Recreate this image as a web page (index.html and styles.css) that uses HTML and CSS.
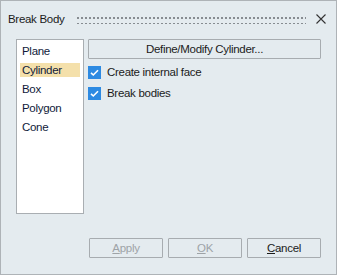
FILE: index.html
```html
<!DOCTYPE html>
<html lang="en">
<head>
    <meta charset="UTF-8">
    <title>Break Body</title>
    <link rel="stylesheet" href="styles.css">
</head>
<body>
    <div class="dialog">
        <div class="titlebar">
            <span class="title">Break Body</span>
            <span class="grip"></span>
            <svg class="close" width="10" height="10" viewBox="0 0 10 10">
                <path d="M0.5 0.5 L9.5 9.5 M9.5 0.5 L0.5 9.5" stroke="#333" stroke-width="1.1" fill="none"/>
            </svg>
        </div>
        <div class="body">
            <ul class="shapes">
                <li>Plane</li>
                <li class="selected">Cylinder</li>
                <li>Box</li>
                <li>Polygon</li>
                <li>Cone</li>
            </ul>
            <div class="options">
                <button class="btn wide">Define/Modify Cylinder...</button>
                <label class="check"><span class="box"><svg width="13" height="13" viewBox="0 0 13 13"><path d="M3 6.8 L5.3 9 L10 4.2" stroke="#fff" stroke-width="1.6" fill="none"/></svg></span>Create internal face</label>
                <label class="check"><span class="box"><svg width="13" height="13" viewBox="0 0 13 13"><path d="M3 6.8 L5.3 9 L10 4.2" stroke="#fff" stroke-width="1.6" fill="none"/></svg></span>Break bodies</label>
            </div>
        </div>
        <div class="footer">
            <button class="btn disabled"><u>A</u>pply</button>
            <button class="btn disabled"><u>O</u>K</button>
            <button class="btn"><u>C</u>ancel</button>
        </div>
    </div>
</body>
</html>
```
FILE: styles.css
```css
body {
    margin: 0;
    font-family: "Liberation Sans", Arial, sans-serif;
    font-size: 11.5px;
    letter-spacing: -0.3px;
    color: #1b1b1b;
}
.dialog {
    width: 335px;
    height: 273px;
    border: 1px solid #aeb3b7;
    background: #e4ebef;
    display: flex;
    flex-direction: column;
}
.titlebar {
    height: 37px;
    display: flex;
    align-items: center;
    padding: 0 10px 0 7px;
    box-sizing: border-box;
}
.title {
    margin-top: -1px;
}
.grip {
    flex: 1;
    height: 8px;
    margin: 0 10px 0 12px;
    background-image: radial-gradient(circle, #878c91 0.9px, transparent 1.2px);
    background-size: 4px 6px;
    background-position: 0 -1px;
}
.close {
    margin-top: -1px;
}
.body {
    display: flex;
    padding: 1px 15px 0 15px;
    gap: 4px;
}
.shapes {
    list-style: none;
    margin: 0;
    padding: 4px 3px;
    width: 60px;
    height: 165px;
    background: #fff;
    border: 1px solid #a9aeb2;
    color: #0f1a3a;
}
.shapes li {
    height: 14px;
    line-height: 14px;
    margin-bottom: 5px;
    padding-left: 2px;
}
.shapes li.selected {
    background: #f4e0ab;
}
.options {
    flex: 1;
    display: flex;
    flex-direction: column;
}
.btn {
    font: inherit;
    letter-spacing: inherit;
    color: #1b1b1b;
    background: #e4ebef;
    border: 1px solid #a7acb0;
    border-radius: 1px;
    height: 20px;
    padding: 0;
}
.btn.disabled {
    color: #9ea3a7;
}
.wide {
    width: 233px;
}
.check {
    display: flex;
    align-items: center;
    height: 13px;
    line-height: 13px;
    margin-top: 7px;
}
.check + .check {
    margin-top: 8px;
}
.box {
    width: 13px;
    height: 13px;
    background: #2d8ae2;
    margin-right: 6px;
    display: block;
}
.box svg {
    display: block;
}
.footer {
    margin-top: auto;
    display: flex;
    justify-content: flex-end;
    gap: 5px;
    padding: 0 15px 16px 0;
}
.footer .btn {
    width: 74px;
}
```
